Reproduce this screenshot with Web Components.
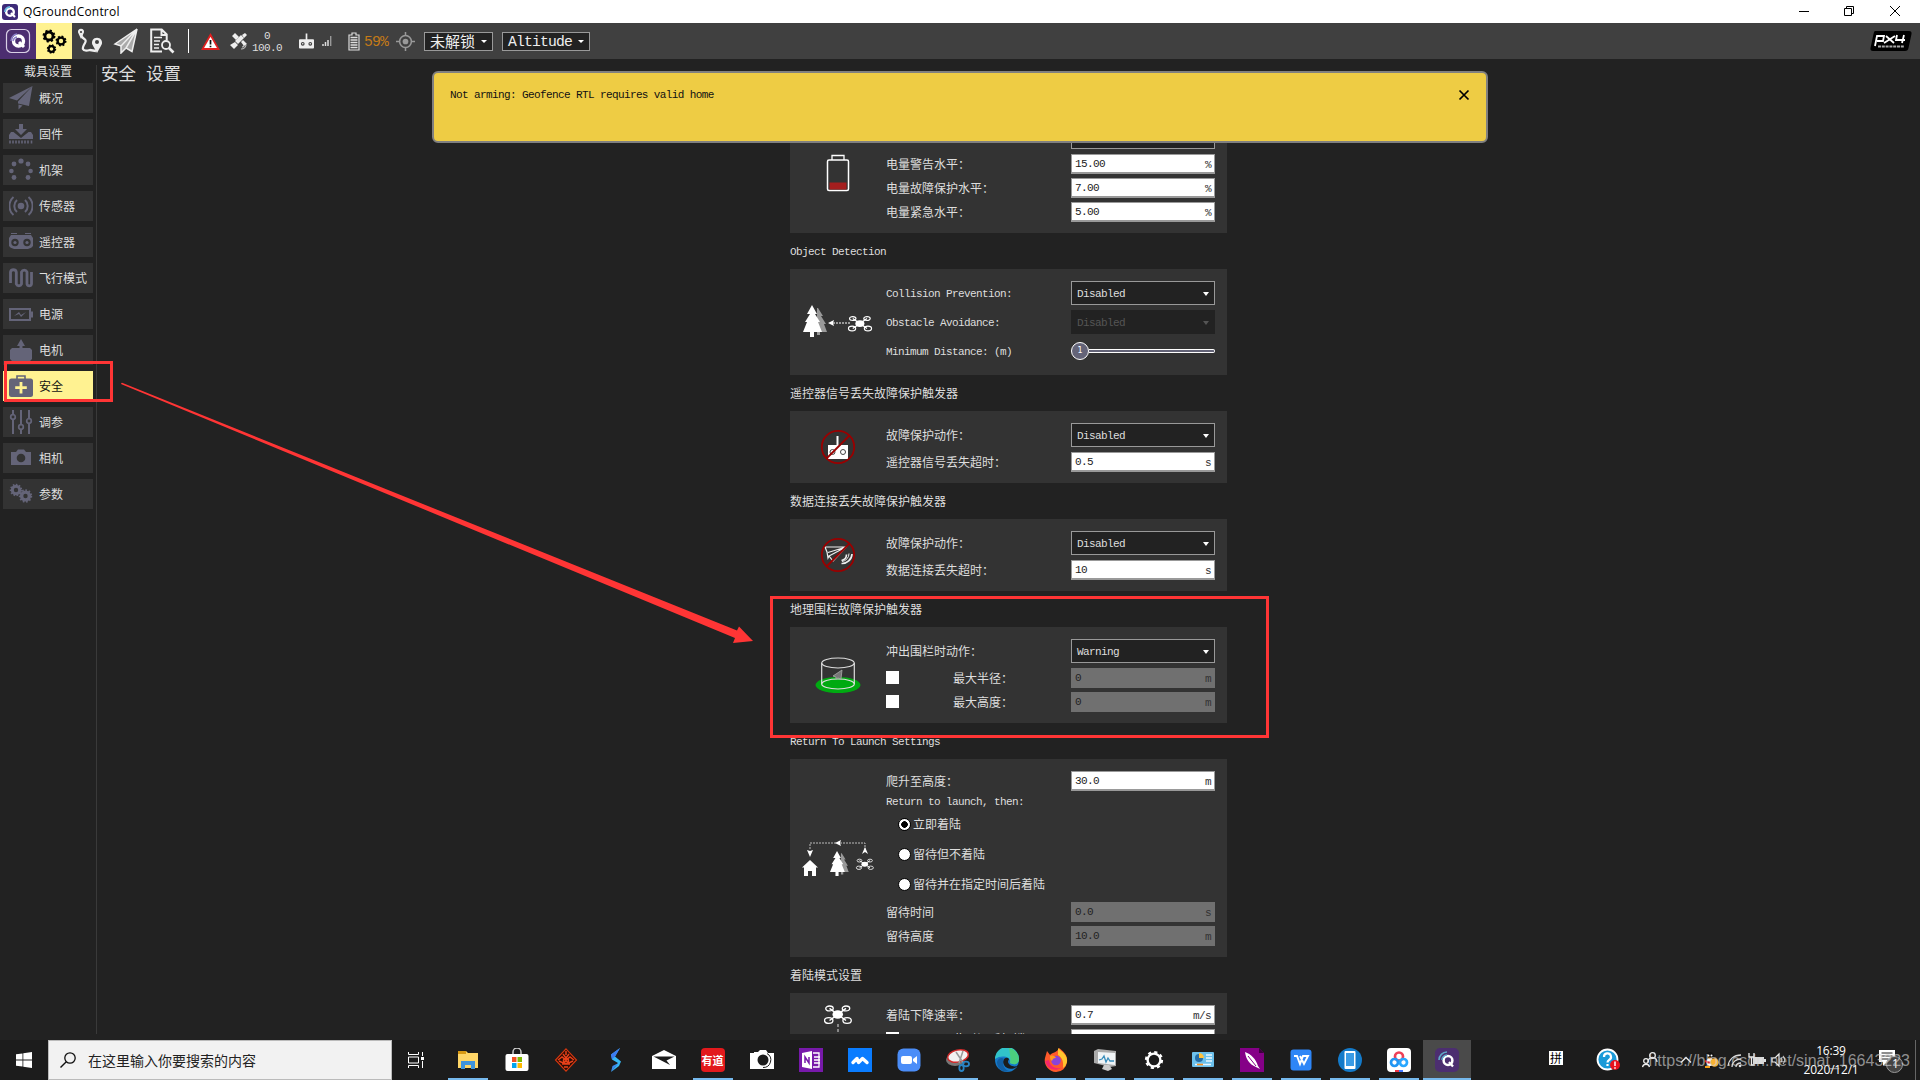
<!DOCTYPE html>
<html lang="zh-CN">
<head>
<meta charset="utf-8">
<title>QGroundControl</title>
<style>
  html, body{
    margin: 0;
    width: 1920px;
    height: 1080px;
    overflow: hidden;
    background-color: #222;
  }
  body{
    font-family: "Liberation Mono", "Noto Sans CJK SC", monospace;
    font-size: 12px;
    color: #dedede;
  }
</style>
</head>
<body>
<qgc-desktop></qgc-desktop>

<script>
// toothed wheel: a solid ring with a dashed outer ring
function gear(x, y, r, teeth, hole, color){
  const step = 2 * Math.PI * r / (teeth * 2)
  return `<circle cx="${x}" cy="${y}" r="${r}" fill="none" stroke="${color}" stroke-width="${r * 0.4}" stroke-dasharray="${step}"/>
    <circle cx="${x}" cy="${y}" r="${(r + hole) / 2}" fill="none" stroke="${color}" stroke-width="${r - hole}"/>`
}

const drone = `
  <g fill="none" stroke="#fff" stroke-width="1.2"><ellipse cx="5" cy="4" rx="3.4" ry="2.2"/><ellipse cx="20" cy="4" rx="3.4" ry="2.2"/>
  <ellipse cx="4.3" cy="15" rx="3.8" ry="2.6"/><ellipse cx="21" cy="15" rx="3.8" ry="2.6"/>
  <path d="M5 4l15 11M20 4L5 15" stroke-width="1.4"/></g>
  <ellipse cx="12.5" cy="9.5" rx="4.8" ry="3.8" fill="#fff"/>`

const tree = `
  <path d="M15 3l5 8h-2l5 8h-2l3 8h-7v3h-3V3z" fill="#999"/>
  <path d="M9 0l5 9h-2l5 8h-2l4 10h-8v5H7v-5H0L4 17H2l5-8H4z" fill="#fff"/>`

const icons = {
  qgcApp: ['0 0 16 16', `<rect width="16" height="16" rx="3" fill="#3d2a78"/><circle cx="8" cy="8" r="3.8" fill="none" stroke="#fff" stroke-width="2.4"/><path d="M9 9l4 4" stroke="#fff" stroke-width="2.2"/><path d="M3 8a5 5 0 0 1 5-5" stroke="#6db9e0" stroke-width="2" fill="none"/>`],
  qgc: ['0 0 36 36', `<rect x="6.5" y="6.500" width="23" height="23" rx="5" fill="#4c2e70" stroke="#d9cfe6" stroke-width="1.2"/><circle cx="18.5" cy="18" r="5" fill="none" stroke="#fff" stroke-width="3.4"/><path d="M19 19l5 5" stroke="#fff" stroke-width="3"/><path d="M11 18a7 7 0 0 1 6-7M13 18a5 5 0 0 1 4-4" stroke="#8c80c8" stroke-width="1.5" fill="none"/>`],
  gears: ['0 0 36 36', gear(13, 13, 5.4, 8, 2.6, '#000') + gear(25, 18, 4.6, 8, 2.2, '#000') + gear(15.5, 26, 3.9, 8, 1.8, '#000')],
  plan: ['0 0 26 26', `<path d="M4 6c0 6 7 4 4 9s-4 9 5 7l6 1" fill="none" stroke="#eee" stroke-width="2.300"/><path d="M4 11L1.300 5a3 3 0 1 1 5.400 0z" fill="#eee"/><circle cx="4" cy="4" r="1.1" fill="#404040"/><path d="M20 25l-4.400-8a5 5 0 1 1 8.800 0z" fill="#eee"/><circle cx="20" cy="14" r="2" fill="#404040"/>`],
  fly: ['0 0 26 26', `<path d="M24 1L2 16l6 2.500V25l5-4.500 6 3z" fill="#aaa"/><path d="M24 1L2 16l6 2zM24 1L13 20l6 3.500zM24 1L8 18v7l5-5" fill="none" stroke="#eee" stroke-width="1.5"/>`],
  analyze: ['0 0 26 26', `<path d="M13 23.500H2.200V1.500h10.500l5 5V12M12.500 2v5h5" fill="none" stroke="#eee" stroke-width="2"/><path d="M5 9.500h8M5 13h6M5 16.500h5M5 20h5" stroke="#eee" stroke-width="1.600"/><circle cx="17" cy="17" r="4" fill="none" stroke="#eee" stroke-width="1.800"/><path d="M20 20l4.500 4.500" stroke="#eee" stroke-width="2.600"/>`],
  warn: ['0 0 20 18', `<path d="M10 0l10 18H0z" fill="#e01f1f"/><path d="M10 4l6.800 12H3.200z" fill="#fff"/><path d="M10 7.500v4.800M10 13.500v1.500" stroke="#111" stroke-width="1.800"/>`],
  sat: ['0 0 19 18', `<g fill="#eee"><path d="M2 4l3-3 4 4-3 3zM11 10l2-2 4 4-3 2z"/><path d="M5 9l6-6 3 3-6 6z"/><path d="M12 3l3-2 2 2-3 3zM0 13l5-3 3 3-4 4z"/></g><path d="M11 17a5 5 0 0 0 5-4M12 15a2 2 0 0 0 2-2" fill="none" stroke="#bbb" stroke-width="1.200"/>`],
  rc: ['0 0 16 16', `<path d="M8 0v7" stroke="#eee" stroke-width="1.800"/><rect y="6" width="16" height="10" rx="1" fill="#eee"/><circle cx="4" cy="11" r="2" fill="#404040"/><circle cx="12" cy="11" r="2" fill="#404040"/><circle cx="4" cy="11" r=".8" fill="#eee"/><circle cx="12" cy="11" r=".8" fill="#eee"/>`],
  signal: ['0 0 10 10', `<path d="M1 8v2M3.500 6v4M6 4v6" stroke="#ddd" stroke-width="1.500"/><path d="M8.700 0v10" stroke="#999" stroke-width="1.400"/>`],
  batt: ['0 0 12 19', `<path d="M4 1h4v2h3v15H1V3h3z" fill="none" stroke="#ddd" stroke-width="1.200"/><path d="M2.500 5.500h7M2.500 8h7M2.500 10.500h7M2.500 13h7M2.500 15.500h7" stroke="#ddd" stroke-width="1.600"/>`],
  home: ['0 0 20 20', `<g fill="none" stroke="#999" stroke-width="1.600"><circle cx="10" cy="10" r="6.200"/><path d="M10 0v4M10 16v4M0 10h4M16 10h4"/></g><circle cx="10" cy="10" r="3" fill="#999"/>`],

  summary: ['0 0 24 24', `<path d="M23.500 0L0 12l8 2.500zM23.500 0L9 15.500v2l11 2.500zM9.500 18.500v5l4-4z" fill="#646478"/>`],
  firmware: ['0 0 24 24', `<path d="M10 2h4v5h4l-6 6-6-6h4z" fill="#646478"/><path d="M2 10h2.500l7.500 6 7.500-6H22l2 3v4H0v-4z" fill="#646478"/><path d="M1 18.500v3M4 18.500v3M7 18.500v3M10 18.500v3M13 18.500v3M16 18.500v3M19 18.500v3M22.500 18.500v3" stroke="#646478" stroke-width="1.600"/>`],
  frame: ['0 0 24 24', `<g fill="#646478"><circle cx="12" cy="3" r="2.600"/><circle cx="5" cy="6" r="2.400"/><circle cx="19" cy="6" r="2.400"/><circle cx="2.400" cy="13" r="2.300"/><circle cx="21.600" cy="13" r="2.300"/><circle cx="5" cy="19.500" r="2.400"/><circle cx="19" cy="19.500" r="2.400"/></g>`],
  sensors: ['0 0 24 24', `<circle cx="12" cy="12" r="3.300" fill="#646478"/><path d="M8 6a8 8 0 0 0 0 12M16 6a8 8 0 0 1 0 12M4.500 3a12 12 0 0 0 0 18M19.500 3a12 12 0 0 1 0 18" fill="none" stroke="#646478" stroke-width="2"/>`],
  radio: ['0 0 24 24', `<path d="M2 3.500h6M16 3.500h6" stroke="#646478" stroke-width="1.200"/><path d="M2 5h20l2 3v8q-1 2-5 3H5q-4-1-5-3V8z" fill="#646478"/><circle cx="6" cy="12.500" r="3.700" fill="#333"/><circle cx="18" cy="12.500" r="3.700" fill="#333"/><circle cx="6" cy="12.500" r="1.600" fill="#646478"/><circle cx="18" cy="12.500" r="1.600" fill="#646478"/>`],
  modes: ['0 0 24 24', `<path d="M1.500 17V6a3 3 0 0 1 5.800 0v12a2.800 2.800 0 0 0 5.200 0V6a3 3 0 0 1 5.500 0v12a2.300 2.300 0 0 0 4.500 0V6" fill="none" stroke="#646478" stroke-width="2.800"/>`],
  power: ['0 0 24 24', `<rect x="1" y="7" width="20" height="11" fill="none" stroke="#646478" stroke-width="2"/><path d="M22 9.500h2v6h-2z" fill="#646478"/><path d="M5 14l5-4 2 3 5-3-5 5-2-3z" fill="#646478"/>`],
  motors: ['0 0 24 24', `<path d="M12 1l4 7h-2.500v2H21l2 2v9l-3 3H4l-3-3v-9l2-2h7.500V8H8z" fill="#646478"/>`],
  safety: ['0 0 24 24', `<path d="M8 5V2h8v3" fill="none" stroke="#646478" stroke-width="1.600"/><rect y="4.500" width="24" height="18.500" rx="2.500" fill="#646478"/><path d="M12 8v11.500M6.200 13.700h11.600" stroke="#fff291" stroke-width="2.800"/>`],
  tuning: ['0 0 24 24', `<path d="M4 0v24M12 0v24M20 0v24" stroke="#646478" stroke-width="2"/><g fill="#333" stroke="#646478" stroke-width="1.700"><circle cx="4" cy="7" r="2.300"/><circle cx="12" cy="17" r="2.300"/><circle cx="20" cy="11" r="2.300"/></g>`],
  camera: ['0 0 24 24', `<path d="M2 6h5l2-2.500h6L17 6h5v13H2z" fill="#646478"/><circle cx="12" cy="12" r="4.300" fill="#333"/>`],
  params: ['0 0 24 24', gear(7, 8, 5.2, 11, 2.2, '#646478') + gear(16.5, 14, 5.6, 11, 2.2, '#646478')],

  lowBattery: ['0 0 24 38', `<path d="M6 6V1.500h12V6" fill="none" stroke="#fff" stroke-width="1.300"/><rect x="1.500" y="6" width="21" height="30.500" rx="1.500" fill="none" stroke="#fff" stroke-width="1.500"/><path d="M3.500 28.500h17v7h-17z" fill="#a41e1e"/>`],
  obstacle: ['0 0 70 36', `<g transform="translate(0 1)">${tree}</g><path d="M25 19l6-3-1 3 1 3z" fill="#fff"/><path d="M30 19h17" stroke="#fff" stroke-dasharray="2 1"/><g transform="translate(45 11) scale(.95 .9)">${drone}</g>`],
  rcLoss: ['0 0 36 36', `<path d="M17.500 7v10" stroke="#fff" stroke-width="2"/><path d="M8 16h20v14H8z" fill="#fff"/><circle cx="12.500" cy="23" r="2.500" fill="none" stroke="#444"/><circle cx="23" cy="23" r="2.500" fill="none" stroke="#444"/><g fill="none" stroke="#900" stroke-width="1.800"><circle cx="18" cy="18" r="16.200"/><path d="M6.500 29.500l23-23"/></g>`],
  linkLoss: ['0 0 36 36', `<path d="M5 10h21L13 24l-4-5-1 2-1-6zM26 10L8 15.500M26 10L9 19" fill="none" stroke="#eee" stroke-width="1.200"/><path d="M26.500 17.500a6 6 0 0 1-5 6M32 17a10 10 0 0 1-10.500 9.500" fill="none" stroke="#eee" stroke-width="1.700"/><path d="M29 16.500a8 8 0 0 1-7 8" fill="none" stroke="#eee" stroke-width="1"/><g fill="none" stroke="#900" stroke-width="1.800"><circle cx="18" cy="18" r="16.200"/><path d="M6.500 29.500l23-23"/></g>`],
  fence: ['0 0 46 36', `<ellipse cx="23" cy="28" rx="22.500" ry="8" fill="#0a1"/><g fill="none" stroke="#ddd" stroke-width="1.200"><ellipse cx="23" cy="6" rx="16.300" ry="5"/><ellipse cx="23" cy="27" rx="16.300" ry="5"/><path d="M6.700 6v21M39.300 6v21"/></g><path d="M27 13l-9 6 3 1v2l2-1 3 1z" fill="#777" stroke="#aaa" stroke-width=".8"/>`],
  rtl: ['0 0 72 36', `<path d="M8 9V3h55v6" fill="none" stroke="#bbb" stroke-dasharray="2 1"/><path d="M5 10l3 1 3-1-3 7zM33 3l6-3-1 3 1 3zM60 14l3-7 3 7-3-2z" fill="#fff"/><path d="M0 27.500L8 20l8 7.500h-2V36h-4v-5H6v5H2v-8.500z" fill="#fff"/><g transform="translate(28 11) scale(.78)">${tree}</g><g transform="translate(54 18) scale(.7 .65)">${drone}</g>`],
  land: ['0 0 28 46', `<g transform="translate(0 -1) scale(1.1)">${drone}</g><path d="M14 19v22" stroke="#888" stroke-width="2" stroke-dasharray="3 2"/>`],

  start: ['0 0 16 16', `<path d="M0 2.300l6.500-.9v6.200H0zM7.300 1.300L16 0v7.600H7.300zM0 8.400h6.500v6.200L0 13.700zM7.300 8.400H16V16l-8.700-1.300z" fill="#fff"/>`],
  search: ['0 0 16 16', `<circle cx="10" cy="6" r="5.200" fill="none" stroke="#111" stroke-width="1.300"/><path d="M6.300 9.700L.5 15.500" stroke="#111" stroke-width="1.400"/>`],
  taskview: ['0 0 16 16', `<path d="M.5 0v2.500h10V0M.5 16v-2.500h10V16M.5 5h10v6H.5zM14.500 0v4M14.500 9v7" fill="none" stroke="#fff"/><path d="M13 5h3v3h-3z" fill="#fff"/>`],
  explorer: ['0 0 24 24', `<path d="M2 3h8l2 2h10v15H2z" fill="#ffd667"/><path d="M2 3h8v3H2z" fill="#d99a13"/><path d="M5 21v-8h14v8h-4v-4H9v4z" fill="#3f94dd"/>`],
  store: ['0 0 24 24', `<path d="M8 8V4a4 4 0 0 1 8 0v4" fill="none" stroke="#ccc" stroke-width="1.500"/><rect x=".5" y="6" width="23" height="17" rx="2" fill="#fff"/><path d="M7 9h4.500v5H7z" fill="#f25022"/><path d="M12.500 9H17v5h-4.500z" fill="#7fba00"/><path d="M7 15h4.500v5H7z" fill="#00a4ef"/><path d="M12.500 15H17v5h-4.500z" fill="#ffb900"/>`],
  redKnot: ['0 0 24 24', `<path d="M12 .8l10.500 11.200L12 23.200 1.500 12z" fill="#2a0c06" stroke="#d9380f" stroke-width="1.100"/><path d="M12 3v4M9 6l3 4 3-4M4 12l4-3 4 3 4-3 4 3M5 13l4 2 3-2 3 2 4-2M8 16h8M10 19h4" fill="none" stroke="#e8411a" stroke-width="1.500"/><circle cx="12" cy="13" r="2.500" fill="none" stroke="#e8411a" stroke-width="1.600"/>`],
  swift: ['0 0 24 24', `<path d="M17 0L8 6.500l1 5 6 3.500-7 9 8-6 2-4.500-6-5z" fill="#37b8f2"/><path d="M17 0L8 6.500l1 5 3-3z" fill="#3d7bf0"/><path d="M8 24l1.500-6 6-3z" fill="#3d8bf0"/>`],
  mail: ['0 0 24 24', `<path d="M0 8l12-6 12 6v13H0z" fill="#fff"/><path d="M1.500 8.500h21l-8 4 3.500 4.500z" fill="#1c1c1c"/>`],
  youdao: ['0 0 24 24', `<rect width="24" height="24" rx="4" fill="#e2191c"/>`],
  camApp: ['0 0 24 24', `<path d="M0 5h4V4h4l2-2h6l2 3h6v16H0z" fill="#fff"/><circle cx="13" cy="12" r="5.500" fill="#1c1c1c"/><path d="M17 5.500a7.500 7.500 0 0 1-4 14" fill="none" stroke="#1c1c1c"/>`],
  onenote: ['0 0 24 24', `<rect width="24" height="24" fill="#7719aa"/><path d="M3 5l10-2v18L3 19z" fill="#fff"/><path d="M14 5h6v14h-6M15 9h6M15 12h6M15 15h6" fill="none" stroke="#fff" stroke-width="1.300"/><path d="M6 15V9l4 6V9" fill="none" stroke="#7719aa" stroke-width="1.500"/>`],
  mountain: ['0 0 24 24', `<rect width="24" height="24" fill="#0a7cff"/><path d="M5 14.500l4-4 1.500 4 4-4 4.500 4" fill="none" stroke="#fff" stroke-width="3.400" stroke-linejoin="round" stroke-linecap="round"/>`],
  zoom: ['0 0 24 24', `<rect x=".5" y=".5" width="23" height="23" rx="6" fill="#4b8df8"/><rect x="4" y="8" width="11" height="8" rx="2" fill="#fff"/><path d="M16 11l4-3v8l-4-3z" fill="#fff"/>`],
  snip: ['0 0 24 24', `<ellipse cx="9" cy="12" rx="9" ry="6" fill="#777"/><ellipse cx="12" cy="8" rx="10.500" ry="6" fill="#f2f2f2" stroke="#d22b2b" stroke-width="1.500" transform="rotate(-12 12 8)"/><path d="M10 4l8 12M17 3l-4 12" stroke="#999" stroke-width="1.500"/><g fill="none" stroke="#2a84c4" stroke-width="1.800"><ellipse cx="20" cy="16" rx="3" ry="2.300"/><ellipse cx="15.500" cy="20" rx="2.200" ry="3"/></g>`],
  edge: ['0 0 24 24', `<circle cx="12" cy="12" r="12" fill="#1579c9"/><path d="M0 11a12 12 0 0 1 24 0c0 6-6 6-9 4 2-6-8-9-15-4z" fill="#31c3c9"/><path d="M14 0a12 12 0 0 1 10 11c0 6-6 6-9 4 1-5 0-8-1-15z" fill="#52d26c" opacity=".8"/><path d="M24 17c-4 3-10 1-11-3 0-2 1-2 1-3-2-3-8 0-5 6 3 5 10 5 15 0z" fill="#1c1c1c"/><path d="M9 11c-3 5 1 12 6 12-8 2-13-3-13-9 1-4 5-5 7-3z" fill="#115ea3"/>`],
  firefox: ['0 0 24 24', `<path d="M12 24A11.500 11.500 0 0 1 1 10l2-7 3 4c3-3 7-2 9-7 4 3 9 7 8 14a11 11 0 0 1-11 10z" fill="#ff5a2a"/><path d="M14 0c4 4 10 7 9 14-1 3-2 5-4 6 1-8-2-11-5-13z" fill="#ffc52e"/><path d="M1 13c2 8 10 11 16 7-8 1-11-3-12-8z" fill="#f5276b"/><circle cx="12" cy="12.500" r="4.800" fill="#8a43d8"/><path d="M6 8c3-1 5 0 6 2-3 0-3 1-4 3-2-1-2-3-2-5z" fill="#ff9a1f"/>`],
  monitor: ['0 0 24 24', `<path d="M1 3l4-2 18 2v15l-6 1-16-4z" fill="#aaa"/><path d="M5 4l17 1v12L5 15z" fill="#f0f4f6"/><path d="M6 12l3-1 2-3 2 6 2-4 2 3 4 0" fill="none" stroke="#388dbb" stroke-width="1.300"/><path d="M11 17h5l3 4-4 2-6-2z" fill="#ccc"/>`],
  settings: ['0 0 24 24', gear(12, 12, 7.6, 8, 5.2, '#fff')],
  panel: ['0 0 24 24', `<rect x="1" y="4" width="22" height="15" rx="1" fill="#6cc1ec"/><circle cx="8" cy="10" r="4" fill="#246ca6"/><path d="M8 10V5a5 5 0 0 1 5 5z" fill="#ffc23d"/><path d="M15 7h6M15 10h6M15 13h6M4 16.500h16" stroke="#e8f7ff" stroke-width="1.400"/><path d="M6 16.500h6" stroke="#f58f1d" stroke-width="1.500"/>`],
  feather: ['0 0 24 24', `<path d="M0 0h19l5 5v19H0z" fill="#850087"/><path d="M19 0v5h5" fill="#3e003f"/><path d="M5 4c6 2 11 7 13 14l2 3-4-2C9 16 6 11 5 4z" fill="#fff"/><path d="M8 8l8 10" stroke="#850087"/>`],
  wps: ['0 0 24 24', `<rect x="1.500" y="1.500" width="21" height="21" rx="3" fill="#2e86f7"/><path d="M5 8h3l3 8 3-8h5l-4 8-4-8" fill="none" stroke="#fff" stroke-width="1.900"/>`],
  phone: ['0 0 24 24', `<circle cx="12" cy="12" r="12" fill="#147ac9"/><rect x="6.500" y="3" width="11" height="18" rx="1" fill="#fff"/><path d="M8 5h8v13H8z" fill="#3a9be5"/>`],
  baidu: ['0 0 24 24', `<rect width="24" height="24" rx="4" fill="#fff"/><g fill="none" stroke-width="2.700"><circle cx="12" cy="8.500" r="4" stroke="#ee3f57"/><circle cx="7.500" cy="14.500" r="3.500" stroke="#2196f3"/><circle cx="16.500" cy="14.500" r="3.500" stroke="#28a7ff"/></g><path d="M8 22h4v2H8z" fill="#e34"/><path d="M12 22h4v2h-4z" fill="#47f"/>`],
  qgcTask: ['0 0 24 24', `<rect width="24" height="24" rx="5" fill="#4c2e70"/><circle cx="13" cy="12.500" r="4.400" fill="none" stroke="#fff" stroke-width="2.500"/><path d="M14 14l4 4.500" stroke="#fff" stroke-width="2.300"/><path d="M4 12a8 8 0 0 1 8-8M7 12a5 5 0 0 1 5-5" fill="none" stroke="#60a8c8" stroke-width="1.600"/>`],

  help: ['0 0 24 24', `<circle cx="11.500" cy="11.500" r="10" fill="#1b9ad8" stroke="#fff" stroke-width="1.800"/><path d="M8 9a3.500 3.500 0 1 1 5 3c-1 .7-1.500 1-1.500 2.500M11.500 16v2" fill="none" stroke="#fff" stroke-width="2.200"/><circle cx="19" cy="17" r="5" fill="#e8121c"/><path d="M19 13.500v4.500M19 19.200v1.500" stroke="#fff" stroke-width="1.500"/>`],
  people: ['0 0 16 16', `<g fill="none" stroke="#eee" stroke-width="1.300"><circle cx="10.500" cy="3.500" r="2.800"/><path d="M6 10a4.500 4.500 0 0 1 9 0"/><circle cx="4" cy="9" r="2.300"/><path d="M.5 15a3.600 3.600 0 0 1 7 0"/></g>`],
  up: ['0 0 12 12', `<path d="M1 8.500l5-5 5 5" fill="none" stroke="#eee" stroke-width="1.400"/>`],
  penguin: ['0 0 16 16', `<ellipse cx="7" cy="8" rx="5" ry="8" fill="#111"/><ellipse cx="7" cy="10" rx="3.500" ry="4" fill="#fff"/><path d="M2 8c4 2 7 2 10 0v2c-3 2-7 2-10 0z" fill="#d22"/><circle cx="5.500" cy="3.500" r="1" fill="#fff"/><circle cx="8.500" cy="3.500" r="1" fill="#fff"/><path d="M5 5.500h4L7 7zM2 14h5v2H2z" fill="#f8a21a"/><circle cx="11.500" cy="10.500" r="4.200" fill="#f9b233"/>`],
  wifi: ['0 0 16 16', `<g fill="none" stroke="#ddd" stroke-width="1.300"><path d="M1 14C2 7 7 3 14 3M5 15c0-5 4-8 9-8M9 15c0-3 2-4 5-4"/></g><circle cx="13" cy="14" r="1.300" fill="#ddd"/>`],
  plug: ['0 0 18 16', `<rect x="5" y="5" width="11" height="7" fill="#ddd"/><path d="M16 7h2v3h-2" fill="#ddd"/><path d="M1 1v4h5V1M3.500 5v8h3" fill="none" stroke="#eee" stroke-width="1.300"/>`],
  speaker: ['0 0 16 16', `<path d="M1 6h3l4-4v12l-4-4H1z" fill="none" stroke="#eee" stroke-width="1.200"/><path d="M10 6a3 3 0 0 1 0 4M12 4a6 6 0 0 1 0 8" fill="none" stroke="#bbb" stroke-width="1.200"/>`],
  notice: ['0 0 26 26', `<path d="M1 3h16v12H9l-4 4v-4H1z" fill="#fff"/><path d="M3.500 6h11M3.500 9h11M3.500 12h7" stroke="#1c1c1c"/><circle cx="16.500" cy="17.500" r="8" fill="#444" stroke="#999"/>`]
}

// Base class: puts the template into an open shadow root once connected
class QgcElement extends HTMLElement{
  constructor(){
    super()
    this.shadow = this.attachShadow({mode: 'open'})
  }
  connectedCallback(){
    this.shadow.innerHTML = this.template()
  }
  attr(name, other = ''){
    return this.hasAttribute(name) ? this.getAttribute(name) : other
  }
}

// half-width text advances by half of the full-width size: 6px at 12px, 8px at 16px
function tracking(text){
  return /[\u3000-\u9fff\uff00-\uffef]/.test(text) ? 'cjk' : 'latin'
}
const textStyle = `
  .latin{ font-size: 0.92em; letter-spacing: -0.0565em; white-space: pre; transform: translateY(1px); }
  .cjk{ white-space: pre; font-family: "Noto Sans CJK SC", sans-serif; }
`

class QgcIcon extends QgcElement{
  template(){
    const [box, body] = icons[this.attr('name')]
    const w = this.attr('w', '24')
    const h = this.attr('h', w)
    return `
      <style>
        :host{ display: block; flex: none; width: ${w}px; height: ${h}px; }
        svg{ display: block; }
      </style>
      <svg width="${w}" height="${h}" viewBox="${box}">${body}</svg>`
  }
}

class QgcTitlebar extends QgcElement{
  template(){
    return `
      <style>
        :host{ display: flex; align-items: center; height: 23px; background-color: #fff; color: #000; font: 12px "Open Sans", sans-serif; }
        span{ margin-left: 5px; flex: 1; letter-spacing: 0.2px; }
        svg{ display: block; margin-right: 14px; }
      </style>
      <qgc-icon name="qgcApp" w="16" style="margin-left:2px"></qgc-icon>
      <span>QGroundControl</span>
      <svg width="110" height="20" fill="none" stroke="#000"><path d="M3 9.500h10"/><path d="M48.500 6.500h7v7h-7zM50.500 6.500v-2h7v7h-2"/><path d="M94 4l10 10M104 4L94 14"/></svg>`
  }
}

class QgcToolbar extends QgcElement{
  template(){
    return `
      <style>
        :host{ display: flex; align-items: center; height: 36px; background-color: #404040; font-size: 16px; }
        ${textStyle}
        .tile{ width: 36px; height: 36px; background-color: #4c2e70; }
        .on{ background-color: #fff291; }
        .bar{ width: 1px; height: 24px; background-color: #fff; margin: 0 12px 0 13px; }
        .gps{ display: flex; flex-direction: column; align-items: center; width: 30px; margin-left: 3px; font-size: 12px; line-height: 12px; }
        .pct{ color: #c47a17; margin-left: 4px; width: 26px; }
        .drop{ display: flex; align-items: center; justify-content: space-between; box-sizing: border-box; height: 19px; border: 1px solid #999; background-color: #222; padding: 0 5px; color: #eee; }
        .drop i{ border: 3px solid transparent; border-top-color: #fff; border-bottom: 0; }
        .px4{ display: block; margin-left: auto; margin-right: 8px; }
      </style>
      <div class="tile"><qgc-icon name="qgc" w="36"></qgc-icon></div>
      <div class="tile on"><qgc-icon name="gears" w="36"></qgc-icon></div>
      <qgc-icon name="plan" w="26" style="margin-left:5px"></qgc-icon>
      <qgc-icon name="fly" w="26" style="margin-left:10px"></qgc-icon>
      <qgc-icon name="analyze" w="26" style="margin-left:10px"></qgc-icon>
      <div class="bar"></div>
      <qgc-icon name="warn" w="19" h="17"></qgc-icon>
      <qgc-icon name="sat" w="19" h="18" style="margin-left:10px"></qgc-icon>
      <div class="gps"><span class="latin">0</span><span class="latin">100.0</span></div>
      <qgc-icon name="rc" w="15" h="16" style="margin-left:17px"></qgc-icon>
      <qgc-icon name="signal" w="10" style="margin-left:8px"></qgc-icon>
      <qgc-icon name="batt" w="12" h="19" style="margin-left:16px"></qgc-icon>
      <span class="latin pct">59%</span>
      <qgc-icon name="home" w="19" style="margin-left:6px"></qgc-icon>
      <div class="drop" style="width:69px; margin-left:9px"><span class="cjk" style="font-size:15px; transform:translateY(-1px)">未解锁</span><i></i></div>
      <div class="drop" style="width:88px; margin-left:9px"><span class="latin">Altitude</span><i></i></div>
      <svg class="px4" width="42" height="20"><path d="M5 0h34q3 0 2.500 3l-3 14q-.5 3-3.500 3H3Q0 20 .5 17l3-14Q4 0 5 0z" fill="#000"/>
        <g fill="none" stroke="#fff" stroke-width="1.800"><path d="M5 15l2-10h7l-1 5H7M16 5l8 7M25 5L14 12M27 4l-1 5h9M34 4l-2 8"/></g><path d="M8 15.500h26" stroke="#aaa" stroke-width="2" stroke-dasharray="3 .8"/></svg>`
  }
}

class QgcSideButton extends QgcElement{
  template(){
    return `
      <style>
        :host{ display: flex; align-items: center; height: 30px; background-color: #333; color: #dedede; padding-left: 6px; gap: 6px; }
        :host([checked]){ background-color: #fff291; color: #111; }
        ${textStyle}
        .cjk{ transform: translateY(-1px); }
      </style>
      <qgc-icon name="${this.attr('icon')}" w="24"></qgc-icon>
      <span class="cjk"><slot></slot></span>`
  }
}

class QgcSidebar extends QgcElement{
  template(){
    return `
      <style>
        :host{ display: block; box-sizing: border-box; width: 93px; padding-left: 3px; }
        ${textStyle}
        .head{ height: 24px; line-height: 23px; text-align: center; }
        nav{ display: flex; flex-direction: column; gap: 6px; }
      </style>
      <div class="head cjk">载具设置</div>
      <nav>
        <qgc-side-button icon="summary">概况</qgc-side-button>
        <qgc-side-button icon="firmware">固件</qgc-side-button>
        <qgc-side-button icon="frame">机架</qgc-side-button>
        <qgc-side-button icon="sensors">传感器</qgc-side-button>
        <qgc-side-button icon="radio">遥控器</qgc-side-button>
        <qgc-side-button icon="modes">飞行模式</qgc-side-button>
        <qgc-side-button icon="power">电源</qgc-side-button>
        <qgc-side-button icon="motors">电机</qgc-side-button>
        <qgc-side-button icon="safety" checked>安全</qgc-side-button>
        <qgc-side-button icon="tuning">调参</qgc-side-button>
        <qgc-side-button icon="camera">相机</qgc-side-button>
        <qgc-side-button icon="params">参数</qgc-side-button>
      </nav>`
  }
}

class QgcSection extends QgcElement{
  template(){
    const head = this.attr('head')
    return `
      <style>
        :host{ display: block; }
        ${textStyle}
        .head{ height: 36px; line-height: 36px; }
        .panel{ display: flex; background-color: #333; padding: 12px 12px 12px 0; }
        .icon{ display: flex; align-items: center; justify-content: center; width: 96px; flex: none; }
        .rows{ display: flex; flex-direction: column; gap: 5px; flex: 1; }
      </style>
      ${head ? `<div class="head"><div class="${tracking(head)}">${head}</div></div>` : ''}
      <div class="panel">
        <div class="icon"><slot name="icon"></slot></div>
        <div class="rows"><slot></slot></div>
      </div>`
  }
}

class QgcRow extends QgcElement{
  template(){
    const label = this.attr('label')
    return `
      <style>
        :host{ display: flex; align-items: center; height: 19px; }
        :host([tall]){ height: 24px; }
        :host([text]){ height: 12px; }
        ${textStyle}
        .label{ flex: 1; line-height: 12px; }
        .check{ width: 13px; height: 13px; background-color: #fff; margin: 0 54px 1px 0; }
      </style>
      ${this.hasAttribute('check') ? '<div class="check"></div>' : ''}
      <span class="label ${tracking(label)}">${label}</span>
      <slot></slot>`
  }
}

class QgcCombo extends QgcElement{
  template(){
    return `
      <style>
        :host{ display: flex; align-items: center; justify-content: space-between; box-sizing: border-box; width: 144px; height: 24px; border: 1px solid #999; background-color: #222; padding: 0 5px; }
        :host([off]){ border-color: #222; color: #555; }
        ${textStyle}
        i{ border: 3px solid transparent; border-top: 4px solid #fff; border-bottom: 0; margin-top: 1px; }
        :host([off]) i{ border-top-color: #555; }
      </style>
      <span class="latin"><slot></slot></span><i></i>`
  }
}

class QgcField extends QgcElement{
  template(){
    return `
      <style>
        :host{ display: flex; justify-content: space-between; box-sizing: border-box; width: 144px; height: 20px; margin-bottom: -1px; border: 1px solid #999; border-bottom-width: 2px; background-color: #fff; color: #222; padding: 0 3px; line-height: 17px; }
        :host([off]){ border-color: #707070; background-color: #707070; }
        ${textStyle}
        .unit{ padding-top: 1px; color: #333; }
      </style>
      <span class="latin"><slot></slot></span><span class="latin unit">${this.attr('unit')}</span>`
  }
}

class QgcSlider extends QgcElement{
  template(){
    return `
      <style>
        :host{ display: flex; align-items: center; width: 144px; height: 24px; }
        b{ box-sizing: border-box; width: 18px; height: 18px; border: 1px solid #fff; border-radius: 9px; background-color: #646478; font: 8px/16px "DejaVu Sans", sans-serif; text-align: center; color: #fff; }
        div{ box-sizing: border-box; flex: 1; height: 4px; border: 1px solid #fff; border-left: 0; border-radius: 0 2px 2px 0; background-color: #646478; }
      </style>
      <b>1</b><div></div>`
  }
}

class QgcRadio extends QgcElement{
  template(){
    return `
      <style>
        :host{ display: flex; align-items: center; height: 25px; padding-left: 12px; gap: 2px; }
        ${textStyle}
        .cjk{ transform: translateY(-1px); }
        i{ box-sizing: border-box; width: 13px; height: 13px; border: 1px solid #000; border-radius: 7px; background-color: #fff; }
        :host([checked]) i{ background: radial-gradient(circle, #000 3px, #fff 3.6px); }
      </style>
      <i></i><span class="cjk"><slot></slot></span>`
  }
}

class QgcBanner extends QgcElement{
  template(){
    return `
      <style>
        :host{ display: flex; justify-content: space-between; box-sizing: border-box; border: 2px solid #808080; border-radius: 6px; background-color: #eecc44; color: #111; padding: 15px 16px 0 16px; }
        ${textStyle}
        svg{ display: block; margin-top: 1px; }
      </style>
      <span class="latin"><slot></slot></span>
      <svg width="12" height="12"><path d="M1.500 1.500l9 9M10.500 1.500l-9 9" stroke="#000" stroke-width="1.700"/></svg>`
  }
}

class SafetyPage extends QgcElement{
  template(){
    return `
      <style>
        :host{ display: flex; height: 975px; overflow: hidden; }
        .line{ width: 1px; margin: 6px 4px 0 3px; background-color: #3a3a3a; }
        .title{ width: 689px; font-size: 17.5px; line-height: 28px; word-spacing: 6px; }
        ${textStyle}
        .column{ width: 437px; padding-top: 54px; }
      </style>
      <qgc-sidebar></qgc-sidebar>
      <div class="line"></div>
      <div class="title cjk">安全 设置</div>
      <div class="column">
        <qgc-section>
          <qgc-icon slot="icon" name="lowBattery" w="24" h="38"></qgc-icon>
          <qgc-row tall><qgc-combo></qgc-combo></qgc-row>
          <qgc-row label="电量警告水平："><qgc-field unit="%">15.00</qgc-field></qgc-row>
          <qgc-row label="电量故障保护水平："><qgc-field unit="%">7.00</qgc-field></qgc-row>
          <qgc-row label="电量紧急水平："><qgc-field unit="%">5.00</qgc-field></qgc-row>
        </qgc-section>
        <qgc-section head="Object Detection">
          <qgc-icon slot="icon" name="obstacle" w="70" h="36"></qgc-icon>
          <qgc-row tall label="Collision Prevention:"><qgc-combo>Disabled</qgc-combo></qgc-row>
          <qgc-row tall label="Obstacle Avoidance:"><qgc-combo off>Disabled</qgc-combo></qgc-row>
          <qgc-row tall label="Minimum Distance: (m)"><qgc-slider></qgc-slider></qgc-row>
        </qgc-section>
        <qgc-section head="遥控器信号丢失故障保护触发器">
          <qgc-icon slot="icon" name="rcLoss" w="36"></qgc-icon>
          <qgc-row tall label="故障保护动作："><qgc-combo>Disabled</qgc-combo></qgc-row>
          <qgc-row label="遥控器信号丢失超时："><qgc-field unit="s">0.5</qgc-field></qgc-row>
        </qgc-section>
        <qgc-section head="数据连接丢失故障保护触发器">
          <qgc-icon slot="icon" name="linkLoss" w="36"></qgc-icon>
          <qgc-row tall label="故障保护动作："><qgc-combo>Disabled</qgc-combo></qgc-row>
          <qgc-row label="数据连接丢失超时："><qgc-field unit="s">10</qgc-field></qgc-row>
        </qgc-section>
        <qgc-section head="地理围栏故障保护触发器">
          <qgc-icon slot="icon" name="fence" w="46" h="36"></qgc-icon>
          <qgc-row tall label="冲出围栏时动作："><qgc-combo>Warning</qgc-combo></qgc-row>
          <qgc-row check label="最大半径："><qgc-field off unit="m">0</qgc-field></qgc-row>
          <qgc-row check label="最大高度："><qgc-field off unit="m">0</qgc-field></qgc-row>
        </qgc-section>
        <qgc-section head="Return To Launch Settings">
          <qgc-icon slot="icon" name="rtl" w="72" h="36"></qgc-icon>
          <qgc-row label="爬升至高度："><qgc-field unit="m">30.0</qgc-field></qgc-row>
          <qgc-row text label="Return to launch, then:"></qgc-row>
          <qgc-radio checked>立即着陆</qgc-radio>
          <qgc-radio>留待但不着陆</qgc-radio>
          <qgc-radio>留待并在指定时间后着陆</qgc-radio>
          <qgc-row label="留待时间"><qgc-field off unit="s">0.0</qgc-field></qgc-row>
          <qgc-row label="留待高度"><qgc-field off unit="m">10.0</qgc-field></qgc-row>
        </qgc-section>
        <qgc-section head="着陆模式设置">
          <qgc-icon slot="icon" name="land" w="28" h="46"></qgc-icon>
          <qgc-row label="着陆下降速率："><qgc-field unit="m/s">0.7</qgc-field></qgc-row>
          <qgc-row check label="此时间后加锁："><qgc-field unit="s">2.00</qgc-field></qgc-row>
        </qgc-section>
      </div>`
  }
}

class TaskItem extends QgcElement{
  template(){
    return `
      <style>
        :host{ display: flex; flex-direction: column; align-items: center; justify-content: flex-end; width: 49px; height: 40px; }
        .pic{ display: grid; place-items: center; height: 30px; padding-bottom: 3px; font: bold 11px "Noto Sans CJK SC", sans-serif; color: #fff; }
        .pic > *{ grid-area: 1 / 1; }
        .run{ width: 40px; height: 2px; }
        :host([open]) .run{ background-color: #76b9ed; }
        :host([active]){ width: 48px; background-color: #4a4a4a; }
        :host([active]) .run{ width: 48px; background-color: #76b9ed; }
      </style>
      <div class="pic"><qgc-icon name="${this.attr('icon')}" w="24"></qgc-icon><span><slot></slot></span></div>
      <div class="run"></div>`
  }
}

class WinTaskbar extends QgcElement{
  template(){
    return `
      <style>
        :host{ display: flex; align-items: center; height: 40px; background-color: #1c1c1c; color: #fff; font-family: "Open Sans", "Noto Sans CJK SC", sans-serif; }
        .search{ display: flex; align-items: center; box-sizing: border-box; width: 344px; height: 40px; margin-left: 16px; padding-left: 11px; gap: 12px; background-color: #f2f2f2; border: 1px solid #bbb; color: #222; font: 14px "Noto Sans CJK SC", sans-serif; }
        .apps{ display: flex; margin-left: 19px; }
        .tray{ display: flex; align-items: center; flex: 1; height: 40px; }
        .ime{ width: 14px; height: 14px; background-color: #fff; color: #000; font: 12px/13px "Noto Sans CJK SC", sans-serif; text-align: center; margin-left: 78px; margin-bottom: 4px; }
        .clock{ width: 62px; margin-left: 13px; text-align: center; font-size: 12px; line-height: 19px; letter-spacing: -0.2px; white-space: nowrap; }
        .bell{ display: grid; margin-left: 16px; }
        .bell > *{ grid-area: 1 / 1; }
        .bell span{ font-size: 12px; line-height: 16px; margin: 9px 0 0 14px; }
        .edge{ width: 1px; height: 40px; background-color: #666; margin-left: auto; margin-right: 4px; }
      </style>
      <qgc-icon name="start" w="16" style="margin-left:16px"></qgc-icon>
      <div class="search"><qgc-icon name="search" w="16"></qgc-icon><span>在这里输入你要搜索的内容</span></div>
      <qgc-icon name="taskview" w="16" style="margin-left:16px"></qgc-icon>
      <div class="apps">
        <task-item icon="explorer" open></task-item>
        <task-item icon="store"></task-item>
        <task-item icon="redKnot"></task-item>
        <task-item icon="swift"></task-item>
        <task-item icon="mail"></task-item>
        <task-item icon="youdao" open>有道</task-item>
        <task-item icon="camApp"></task-item>
        <task-item icon="onenote"></task-item>
        <task-item icon="mountain"></task-item>
        <task-item icon="zoom"></task-item>
        <task-item icon="snip" open></task-item>
        <task-item icon="edge"></task-item>
        <task-item icon="firefox" open></task-item>
        <task-item icon="monitor" open></task-item>
        <task-item icon="settings" open></task-item>
        <task-item icon="panel" open></task-item>
        <task-item icon="feather" open></task-item>
        <task-item icon="wps" open></task-item>
        <task-item icon="phone" open></task-item>
        <task-item icon="baidu" open></task-item>
        <task-item icon="qgcTask" active></task-item>
      </div>
      <div class="tray">
        <div class="ime">拼</div>
        <qgc-icon name="help" w="24" style="margin-left:33px"></qgc-icon>
        <qgc-icon name="people" w="16" style="margin-left:22px"></qgc-icon>
        <qgc-icon name="up" w="12" style="margin-left:22px"></qgc-icon>
        <qgc-icon name="penguin" w="16" style="margin-left:11px"></qgc-icon>
        <qgc-icon name="wifi" w="16" style="margin-left:8px"></qgc-icon>
        <qgc-icon name="plug" w="18" h="16" style="margin-left:5px"></qgc-icon>
        <qgc-icon name="speaker" w="16" style="margin-left:5px"></qgc-icon>
        <div class="clock">16:39<br>2020/12/1</div>
        <div class="bell"><qgc-icon name="notice" w="26"></qgc-icon><span>1</span></div>
        <div class="edge"></div>
      </div>`
  }
}

class QgcDesktop extends QgcElement{
  template(){
    return `
      <style>
        :host{ display: flex; flex-direction: column; position: relative; width: 1920px; height: 1080px; }
        win-taskbar{ margin-top: 6px; }
        qgc-banner{ position: absolute; left: 432px; top: 71px; width: 1056px; height: 72px; }
        .marks{ position: absolute; left: 0; top: 0; pointer-events: none; }
        .water{ position: absolute; right: 10px; top: 1051px; font: 16px/20px "Liberation Sans", sans-serif; color: rgba(210, 210, 210, 0.65); white-space: nowrap; }
      </style>
      <qgc-titlebar></qgc-titlebar>
      <qgc-toolbar></qgc-toolbar>
      <safety-page></safety-page>
      <win-taskbar></win-taskbar>
      <qgc-banner>Not arming: Geofence RTL requires valid home</qgc-banner>
      <svg class="marks" width="1920" height="1080">
        <g fill="none" stroke="#ff3535" stroke-width="3"><rect x="5.500" y="362.500" width="106" height="38"/><rect x="771.500" y="597.500" width="496" height="139"/></g>
        <path d="M121 383.200L122 382.800 737 630.500 739 626.500 753 641 733 643 735 638 121.500 384.200z" fill="#ff3535"/>
      </svg>
      <div class="water">https://blog.csdn.net/sinat_16643223</div>`
  }
}

customElements.define('qgc-icon', QgcIcon)
customElements.define('qgc-titlebar', QgcTitlebar)
customElements.define('qgc-toolbar', QgcToolbar)
customElements.define('qgc-side-button', QgcSideButton)
customElements.define('qgc-sidebar', QgcSidebar)
customElements.define('qgc-section', QgcSection)
customElements.define('qgc-row', QgcRow)
customElements.define('qgc-combo', QgcCombo)
customElements.define('qgc-field', QgcField)
customElements.define('qgc-slider', QgcSlider)
customElements.define('qgc-radio', QgcRadio)
customElements.define('qgc-banner', QgcBanner)
customElements.define('safety-page', SafetyPage)
customElements.define('task-item', TaskItem)
customElements.define('win-taskbar', WinTaskbar)
customElements.define('qgc-desktop', QgcDesktop)
</script>
</body>
</html>
